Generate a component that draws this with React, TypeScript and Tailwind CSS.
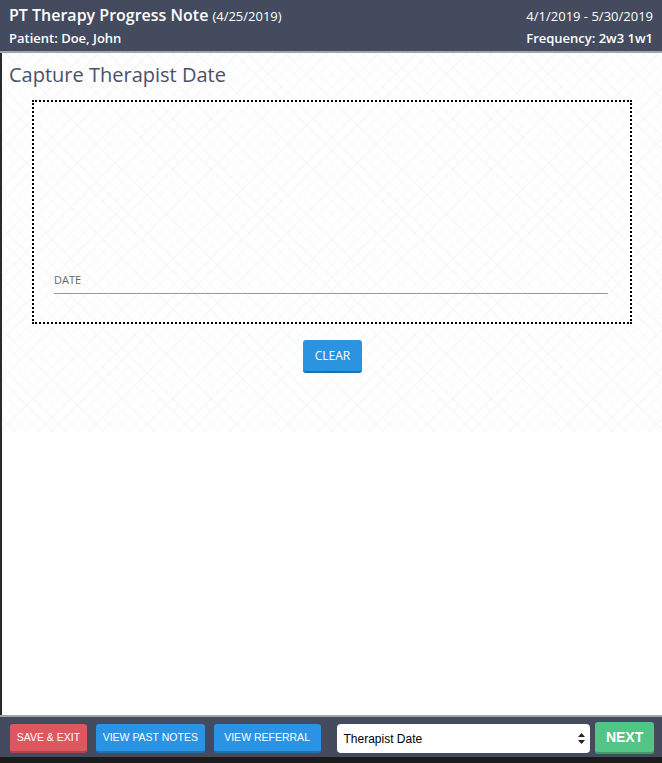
import React from 'react';

const font = "font-['Open_Sans',sans-serif]";
const btnFont = "font-['Liberation_Sans',Arial,sans-serif]";

export default function App() {
  return (
    <div className={`h-[763px] w-[662px] flex flex-col bg-white ${font}`}>
      {/* Header */}
      <div className="bg-[#444b5f] text-white h-[51px] px-[9px] flex flex-col justify-between pt-[5px] pb-[4px]">
        <div className="flex items-baseline justify-between">
          <div className="flex items-baseline gap-[4px]">
            <span className="text-[16px] font-semibold leading-[20px]">PT Therapy Progress Note</span>
            <span className="text-[13px] font-medium leading-[20px]">(4/25/2019)</span>
          </div>
          <span className="text-[13px] font-medium leading-[20px]">4/1/2019 - 5/30/2019</span>
        </div>
        <div className="flex items-baseline justify-between">
          <span className="text-[13px] font-semibold leading-[18px]">Patient: Doe, John</span>
          <span className="text-[13px] font-semibold leading-[18px]">Frequency: 2w3 1w1</span>
        </div>
      </div>
      <div className="h-[2px] bg-[#a4a4a8]" />

      {/* Main */}
      <div className="flex-1 border-l-2 border-[#2a2a2a] flex flex-col">
        <div className="h-[379px] bg-white bg-[image:repeating-linear-gradient(45deg,#f7f7f7_0_1px,transparent_1px_9px),repeating-linear-gradient(-45deg,#f7f7f7_0_1px,transparent_1px_9px)]">
          <h1 className="text-[20px] text-[#4a5068] leading-[26px] pl-[7px] pt-[9px]">Capture Therapist Date</h1>
          <div className="mx-[30px] mt-[12px] h-[224px] border-2 border-dotted border-black flex flex-col justify-end px-[20px] pb-[28px]">
            <span className="text-[11px] text-[#666] leading-[14px]">DATE</span>
            <div className="h-px bg-[#999] mt-[6px] mr-[2px]" />
          </div>
          <div className="flex justify-center mt-[16px]">
            <button className="h-[33px] w-[59px] rounded-[3px] bg-[#2b94e1] border-b-2 border-[#1f6fb0] text-white text-[12px] ml-[1px]">
              CLEAR
            </button>
          </div>
        </div>
        <div className="flex-1 bg-white" />
      </div>

      {/* Footer */}
      <div className="h-[2px] bg-[#a4a4a8]" />
      <div className={`bg-[#444b5f] h-[40px] flex items-center pl-[10px] pr-[8px] ${btnFont}`}>
        <button className="h-[29px] w-[77px] rounded-[3px] bg-[#dc585e] border-b-2 border-[#b2434a] text-white text-[10.5px] mt-[3px]">
          SAVE &amp; EXIT
        </button>
        <button className="h-[29px] w-[109px] ml-[9px] rounded-[3px] bg-[#2a93e4] border-b-2 border-[#1f71b3] text-white text-[10.5px] mt-[3px]">
          VIEW PAST NOTES
        </button>
        <button className="h-[29px] w-[107px] ml-[9px] rounded-[3px] bg-[#2a93e4] border-b-2 border-[#1f71b3] text-white text-[10.5px] mt-[3px]">
          VIEW REFERRAL
        </button>
        <div className="ml-[16px] h-[29px] w-[254px] bg-white rounded-[4px] flex items-center justify-between pl-[7px] pr-[5px] mt-[3px]">
          <span className="text-[12px] text-black">Therapist Date</span>
          <svg width="7" height="11" viewBox="0 0 7 11">
            <path d="M3.5 0 L7 4 L0 4 Z" fill="#222" />
            <path d="M0 7 L7 7 L3.5 11 Z" fill="#222" />
          </svg>
        </div>
        <button className="ml-[5px] mt-[2px] h-[32px] w-[59px] rounded-[3px] bg-[#52c485] border-b-2 border-[#3f9c68] text-white text-[14px] font-bold">
          NEXT
        </button>
      </div>
      <div className="h-[6px] bg-[#1b1b1b]" />
    </div>
  );
}
